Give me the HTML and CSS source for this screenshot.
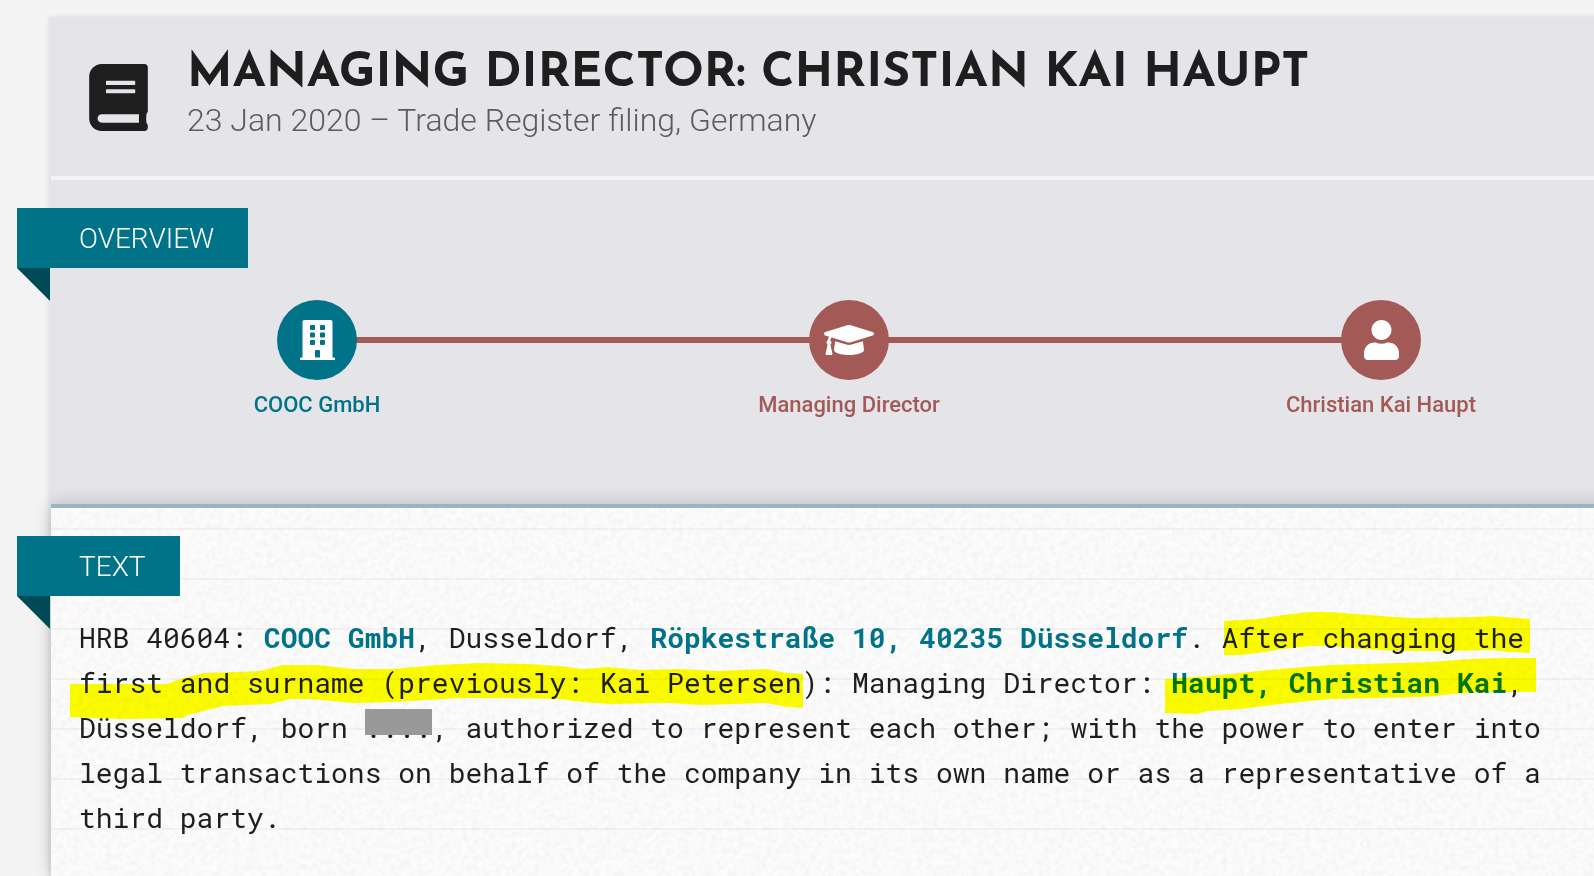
FILE: index.html
```html
<!DOCTYPE html>
<html lang="en">
<head>
<meta charset="UTF-8" />
<meta name="viewport" content="width=device-width, initial-scale=1.0" />
<title>Managing Director: Christian Kai Haupt</title>
<link rel="stylesheet" href="styles.css">
</head>
<body>

<main class="card">
  <header class="card-header">
    <svg class="book" viewBox="0 0 448 512" aria-hidden="true"><path d="M448 360V24c0-13.300-10.700-24-24-24H96C43 0 0 43 0 96v320c0 53 43 96 96 96h328c13.300 0 24-10.700 24-24v-16c0-7.500-3.500-14.300-8.900-18.700-4.200-15.400-4.200-59.300 0-74.700 5.400-4.300 8.900-11.100 8.900-18.600zM128 134c0-3.300 2.700-6 6-6h212c3.300 0 6 2.700 6 6v20c0 3.300-2.700 6-6 6H134c-3.300 0-6-2.700-6-6v-20zm0 64c0-3.300 2.700-6 6-6h212c3.300 0 6 2.700 6 6v20c0 3.300-2.700 6-6 6H134c-3.300 0-6-2.700-6-6v-20zm253.400 250H96c-17.700 0-32-14.300-32-32 0-17.600 14.400-32 32-32h285.400c-1.900 17.100-1.900 46.900 0 64z"/></svg>
    <div>
      <h1>Managing Director: Christian Kai Haupt</h1>
      <p class="subtitle">23 Jan 2020 – Trade Register filing, Germany</p>
    </div>
  </header>

  <section class="overview">
    <h2 class="ribbon">Overview</h2>
    <div class="chain">
      <div class="node company">
        <div class="circle">
          <svg viewBox="0 0 448 512" width="35" height="40" aria-hidden="true"><path fill-rule="evenodd" d="M436 480h-20V24c0-13-11-24-24-24H56C43 0 32 11 32 24v456H12c-7 0-12 5-12 12v20h448v-20c0-7-5-12-12-12zM128 76c0-7 5-12 12-12h40c7 0 12 5 12 12v40c0 7-5 12-12 12h-40c-7 0-12-5-12-12zM256 76c0-7 5-12 12-12h40c7 0 12 5 12 12v40c0 7-5 12-12 12h-40c-7 0-12-5-12-12zM128 172c0-7 5-12 12-12h40c7 0 12 5 12 12v40c0 7-5 12-12 12h-40c-7 0-12-5-12-12zM256 172c0-7 5-12 12-12h40c7 0 12 5 12 12v40c0 7-5 12-12 12h-40c-7 0-12-5-12-12zM128 268c0-7 5-12 12-12h40c7 0 12 5 12 12v40c0 7-5 12-12 12h-40c-7 0-12-5-12-12zM256 268c0-7 5-12 12-12h40c7 0 12 5 12 12v40c0 7-5 12-12 12h-40c-7 0-12-5-12-12zM192 396c0-7 5-12 12-12h40c7 0 12 5 12 12v84h-64z"/></svg>
        </div>
        <span>COOC GmbH</span>
      </div>
      <div class="node">
        <div class="circle">
          <svg viewBox="0 0 640 512" width="50" height="40" aria-hidden="true"><path d="M622.340 153.200L343.400 67.500c-15.200-4.670-31.600-4.670-46.790 0L17.660 153.200c-23.540 7.230-23.540 38.360 0 45.590l48.630 14.940c-10.670 13.190-17.230 29.280-17.880 46.900C38.780 266.150 32 276.110 32 288c0 10.780 5.680 19.850 13.860 25.650L20.330 428.530C18.110 438.520 25.710 448 35.940 448h56.110c10.240 0 17.840-9.480 15.620-19.470L82.140 313.650C90.320 307.850 96 298.780 96 288c0-11.570-6.470-21.250-15.660-26.870.76-15.020 8.440-28.300 20.690-36.720L296.600 284.500c9.060 2.780 26.440 6.250 46.790 0l278.950-85.700c23.550-7.240 23.550-38.360 0-45.600zM352.790 315.090c-28.530 8.760-52.840 3.920-65.590 0l-145.020-44.550L128 384c0 35.350 85.960 64 192 64s192-28.650 192-64l-14.180-113.470-145.030 44.560z"/></svg>
        </div>
        <span>Managing Director</span>
      </div>
      <div class="node">
        <div class="circle">
          <svg viewBox="0 0 448 512" width="35" height="40" aria-hidden="true"><path d="M224 256c70.700 0 128-57.300 128-128S294.700 0 224 0 96 57.300 96 128s57.300 128 128 128zm89.600 32h-16.700c-22.200 10.200-46.900 16-72.900 16s-50.600-5.800-72.900-16h-16.700C60.200 288 0 348.200 0 422.400V464c0 26.500 21.500 48 48 48h352c26.500 0 48-21.500 48-48v-41.600c0-74.200-60.200-134.400-134.400-134.400z"/></svg>
        </div>
        <span>Christian Kai Haupt</span>
      </div>
    </div>
  </section>

  <section class="text">
    <!-- paper grain -->
    <svg class="grain" width="100%" height="100%" aria-hidden="true">
      <filter id="grain">
        <feTurbulence type="fractalNoise" baseFrequency="0.18" numOctaves="4" stitchTiles="stitch"/>
        <feColorMatrix values="0 0 0 0 0  0 0 0 0 0  0 0 0 0 0  0.8 0 0 0 -0.25"/>
      </filter>
      <rect width="100%" height="100%" filter="url(#grain)"/>
    </svg>
    <h2 class="ribbon">Text</h2>
    <div class="filing">
      <p>HRB 40604: <b>COOC GmbH</b>, Dusseldorf, <b>Röpkestraße 10, 40235 Düsseldorf</b>. After changing the first and surname (previously: Kai Petersen): Managing Director: <b>Haupt, Christian Kai</b>, Düsseldorf, born <span class="redacted">....</span>, authorized to represent each other; with the power to enter into legal transactions on behalf of the company in its own name or as a representative of a third party.</p>
      <!-- marker strokes -->
      <svg class="marker" viewBox="79 615 1540 225" width="1540" height="225" aria-hidden="true">
        <path d="M1224 621L1258 619 1283 615 1310 612 1330 612 1370 615 1393 617 1417 618 1473 617 1492 616 1518 618 1530 619V653L1508 652 1492 650 1447 651 1397 651 1363 649 1330 646 1310 646 1282 649 1258 653 1240 655 1224 655z"/>
        <path d="M70 684H167L177 680 203 673 260 671 282 665 317 665 353 669 393 669 437 665 480 663 527 664 560 666 583 669 607 667 640 670 680 669 717 671 767 669 787 673 803 674V708L787 707 767 703 733 704 700 705 670 703 610 704 583 702 560 699 493 698 460 698 393 702 353 703 310 699 290 699 270 704 223 706 187 715 183 718 123 719 70 717z"/>
        <path d="M1165 679L1197 677 1240 673 1280 669 1330 665 1430 662 1470 659 1500 658 1536 658V692L1497 692 1463 693 1423 697 1330 699 1280 704 1240 709 1207 711 1197 714 1165 713z"/>
      </svg>
    </div>
  </section>
</main>

</body>
</html>
```
FILE: styles.css
```css
* {
  box-sizing: border-box;
}
body {
  margin: 0;
  padding-top: 17px;
  background-color: #f4f4f4;
  color: #1e1e1e;
  font-family: Roboto, Arial, sans-serif;
  overflow-x: hidden;
}
h1, h2, p {
  margin: 0;
}
.card {
  display: flex;
  flex-direction: column;
  min-height: calc(100vh - 17px);
  margin-left: 49px;
  margin-right: -53px; /* runs off the right side */
  border-left: 2px solid #e5e4e9;
  background-color: #e5e4e9;
  box-shadow: 0 0 5px rgba(0,0,0,0.1);
}

/* header */
.card-header {
  display: flex;
  gap: 39px;
  padding: 31px 38px 36px;
  border-bottom: 4px solid #f4f4f4;
}
.book {
  flex: none;
  width: 59px;
  height: 67px;
  margin-top: 16px;
  fill: #1e1e1e;
}
h1 {
  font-family: "Josefin Sans", Lato, sans-serif;
  font-size: 48px;
  line-height: 52px;
  font-weight: 700;
  text-transform: uppercase;
}
.subtitle {
  font-size: 32px;
  line-height: 40px;
  font-weight: 300;
  color: #5c5c5e;
}

/* ribbon labels */
.ribbon {
  position: relative;
  width: fit-content;
  margin-left: -34px;
  padding: 2px 34px 0 62px;
  background-color: #007389;
  color: white;
  font-size: 28px;
  line-height: 58px;
  font-weight: 300;
  text-transform: uppercase;
}
.ribbon::after {
  content: "";
  position: absolute;
  top: 100%;
  left: 0;
  width: 33px;
  height: 33px;
  background-color: #004956;
  clip-path: polygon(0 0, 100% 0, 100% 100%);
}

/* overview */
.overview {
  padding: 28px 0 86px;
}
.chain {
  display: flex;
  margin-top: 32px;
}
.node {
  position: relative;
  flex: 1;
  display: flex;
  flex-direction: column;
  align-items: center;
  gap: 12px;
  color: #a35955;
  font-size: 22px;
  line-height: 26px;
  font-weight: 500;
}
.company {
  color: #007389;
}
.node + .node::before {
  content: "";
  position: absolute;
  top: 37px;
  right: 50%;
  width: 100%;
  height: 6px;
  background-color: #a35955;
}
.circle {
  position: relative;
  z-index: 1;
  display: flex;
  align-items: center;
  justify-content: center;
  width: 80px;
  height: 80px;
  border-radius: 50%;
  background-color: currentColor;
}
.circle svg {
  fill: white;
}

/* text */
.text {
  position: relative;
  flex: 1;
  padding: 28px 28px 32px;
  border-top: 4px solid #9ab4c2;
  background: repeating-linear-gradient(transparent 0 20px, #f3f3f3 20px 22px, transparent 22px 50px) #fcfcfc;
  box-shadow: 0 0 18px rgba(0,0,0,0.2);
}
.text .ribbon {
  margin-left: -62px;
}
.grain {
  position: absolute;
  top: 0;
  left: 0;
  opacity: 0.08;
}
.filing {
  position: relative;
  margin-top: 19px;
  font-family: "Roboto Mono", "Liberation Mono", monospace;
  font-size: 28px;
  line-height: 45px;
}
.filing b {
  color: #007389;
}
.redacted {
  position: relative;
}
.redacted::after {
  content: "";
  position: absolute;
  top: 0;
  left: 0;
  width: 100%;
  height: 26px;
  background-color: #999;
}
.marker {
  position: absolute;
  top: 0;
  left: 0;
  overflow: visible;
  fill: #ff0;
  mix-blend-mode: multiply;
}
```
